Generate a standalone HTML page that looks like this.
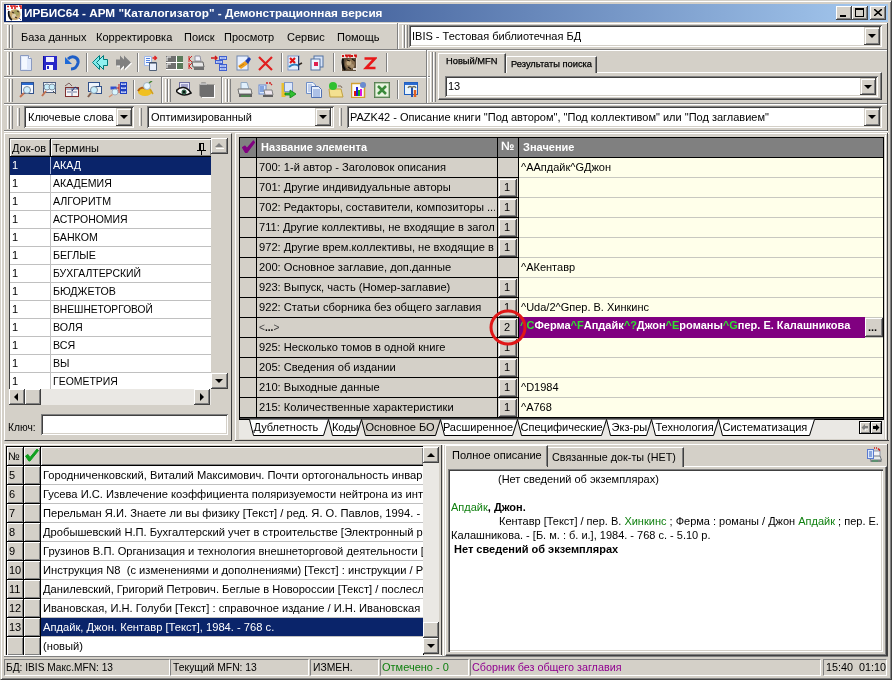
<!DOCTYPE html>
<html><head><meta charset="utf-8">
<style>
*{box-sizing:border-box;margin:0;padding:0}
html,body{width:892px;height:680px;overflow:hidden;background:#D4D0C8;font-family:"Liberation Sans",sans-serif;font-size:11px;color:#000}
.a{position:absolute}
.win{left:0;top:0;width:892px;height:680px;border-top:1px solid #D4D0C8;border-left:1px solid #D4D0C8;border-right:1px solid #404040;border-bottom:1px solid #404040;box-shadow:inset 1px 1px 0 #fff,inset -1px -1px 0 #808080}
.title{left:4px;top:4px;width:884px;height:18px;background:linear-gradient(to right,#0A246A,#A6CAF0)}
.ttext{left:24px;top:4px;height:18px;line-height:18px;color:#fff;font-weight:bold;font-size:11.75px;white-space:nowrap}
.tb{width:16px;height:14px;top:6px;background:#D4D0C8;box-shadow:inset -1px -1px 0 #404040,inset 1px 1px 0 #fff,inset -2px -2px 0 #808080}
.raised{background:#D4D0C8;box-shadow:inset -1px -1px 0 #404040,inset 1px 1px 0 #fff,inset -2px -2px 0 #808080}
.sunken{box-shadow:inset 1px 1px 0 #808080,inset -1px -1px 0 #fff,inset 2px 2px 0 #404040,inset -2px -2px 0 #D4D0C8}
.etchH{height:2px;border-top:1px solid #808080;border-bottom:1px solid #fff}
.grip{width:3px;border-left:1px solid #fff;border-right:1px solid #808080}
.combo{background:#fff;box-shadow:inset 1px 1px 0 #808080,inset -1px -1px 0 #fff,inset 2px 2px 0 #404040,inset -2px -2px 0 #D4D0C8}
.dd{width:16px;background:#D4D0C8;box-shadow:inset -1px -1px 0 #404040,inset 1px 1px 0 #D4D0C8,inset 2px 2px 0 #fff,inset -2px -2px 0 #808080}
.dd:after{content:"";position:absolute;left:4px;top:50%;margin-top:-2px;border-left:4px solid transparent;border-right:4px solid transparent;border-top:4px solid #000}
.ct{white-space:nowrap;line-height:14px}
.t{white-space:nowrap}
.raisedh{background:#D4D0C8;box-shadow:inset 1px 1px 0 #fff,inset -1px -1px 0 #808080}
.sep{width:2px;height:19px;border-left:1px solid #808080;border-right:1px solid #fff}
</style></head><body><div style="position:absolute;left:0;top:0;width:892px;height:680px;will-change:transform">
<div class="a win"></div>
<div class="a title"></div>
<svg class="a" style="left:6px;top:5px" width="16" height="16"><rect width="16" height="16" fill="#fff"/><path d="M1 1.5H3M4 1H6V4M7 1H9V4M10 1.5H12M13 1H15V4" stroke="#d81818" stroke-width="1.6" fill="none"/><path d="M2 4V5" stroke="#d81818"/><ellipse cx="9" cy="9.5" rx="5.5" ry="5.5" fill="#c8a870"/><ellipse cx="10.5" cy="8" rx="3" ry="3" fill="#a8a060"/><circle cx="8" cy="11" r="2.2" fill="#e0d0b0"/><path d="M3 6C2 9,3 13,6 15" stroke="#101010" stroke-width="1.8" fill="none"/><path d="M6 7L8 8M9 12L11 13M11 6L13 7" stroke="#403020" stroke-width="1.2"/><path d="M13 13L15 15" stroke="#6060a0"/></svg>
<div class="a ttext">ИРБИС64 - АРМ "Каталогизатор" - Демонстрационная версия</div>
<div class="a tb" style="left:836px"><div class="a" style="left:4px;top:9px;width:6px;height:2px;background:#000"></div></div>
<div class="a tb" style="left:852px"><div class="a" style="left:3px;top:2px;width:9px;height:9px;border:1px solid #000;border-top-width:2px"></div></div>
<div class="a tb" style="left:870px"><svg class="a" style="left:4px;top:3px" width="8" height="7"><path d="M0 0L8 7M8 0L0 7" stroke="#000" stroke-width="1.6"/></svg></div>

<!-- rebar rows -->
<div class="a" style="left:4px;top:23px;width:883px;height:1px;background:#fff"></div>
<div class="a etchH" style="left:4px;top:49px;width:884px"></div>
<div class="a etchH" style="left:4px;top:76px;width:426px"></div>
<div class="a etchH" style="left:4px;top:103px;width:884px"></div>
<div class="a etchH" style="left:4px;top:130px;width:884px"></div>

<!-- menu band -->
<div class="a grip" style="left:7px;top:25px;height:23px"></div>
<div class="a grip" style="left:10px;top:25px;height:23px"></div>
<div class="a t" style="left:21px;top:31px">База данных</div>
<div class="a t" style="left:96px;top:31px">Корректировка</div>
<div class="a t" style="left:184px;top:31px">Поиск</div>
<div class="a t" style="left:224px;top:31px">Просмотр</div>
<div class="a t" style="left:287px;top:31px">Сервис</div>
<div class="a t" style="left:337px;top:31px">Помощь</div>
<div class="a" style="left:397px;top:23px;width:2px;height:26px;border-left:1px solid #808080;border-right:1px solid #fff"></div>
<div class="a grip" style="left:402px;top:25px;height:23px"></div>
<div class="a grip" style="left:405px;top:25px;height:23px"></div>
<div class="a combo" style="left:409px;top:25px;width:473px;height:22px"><div class="a ct" style="left:3px;top:4px">IBIS - Тестовая библиотечная БД</div></div>
<div class="a dd" style="left:864px;top:27px;height:18px"></div>

<!-- toolbar row 1 -->
<div class="a grip" style="left:7px;top:52px;height:23px"></div>
<div class="a grip" style="left:10px;top:52px;height:23px"></div>
<div class="a" style="left:426px;top:50px;width:2px;height:53px;border-left:1px solid #808080;border-right:1px solid #fff"></div>
<div class="a sep" style="left:86px;top:53px"></div>
<div class="a sep" style="left:137px;top:53px"></div>
<div class="a sep" style="left:281px;top:53px"></div>
<div class="a sep" style="left:333px;top:53px"></div>
<div class="a sep" style="left:386px;top:53px"></div>
<svg class="a" style="left:18px;top:55px" width="16" height="16"><path d="M2.5 0.5H10.5L13.5 3.5V15.5H2.5Z" fill="#dfe8fa" stroke="#8a9ac0"/><path d="M10.5 0.5V3.5H13.5" fill="#fff" stroke="#8a9ac0"/><rect x="4" y="2" width="5" height="12" fill="#f4f8ff"/></svg>
<svg class="a" style="left:42px;top:55px" width="16" height="16"><rect x="1" y="1" width="14" height="14" fill="#2828c8"/><rect x="4" y="2" width="8" height="5" fill="#f0f0ff"/><rect x="4" y="10" width="7" height="5" fill="#f8f8ff"/><rect x="5" y="11" width="2" height="3" fill="#2828c8"/><rect x="1" y="1" width="1" height="14" fill="#1010a0"/></svg>
<svg class="a" style="left:64px;top:55px" width="16" height="16"><path d="M4 4 C8 0,15 2,14 8 C13 12,10 14,7 14" fill="none" stroke="#1e5fc8" stroke-width="3"/><path d="M1 2L1 9L8 9Z" fill="#1e6ad8"/></svg>
<svg class="a" style="left:92px;top:55px" width="17" height="16"><path d="M0.5 7.5L7.5 0.5V14.5Z" fill="#80eaea" stroke="#008080"/><path d="M4.5 7.5L11.5 0.5V4.5H15.5V10.5H11.5V14.5Z" fill="#90f0f0" stroke="#007878"/></svg>
<svg class="a" style="left:115px;top:55px" width="18" height="17"><g transform="translate(1,1)" fill="#fff"><path d="M16 7.5L9 0.5V14.5Z"/><path d="M12 7.5L5 0.5V4.5H1V10.5H5V14.5Z"/></g><path d="M16 7.5L9 0.5V14.5Z" fill="#808080"/><path d="M12 7.5L5 0.5V4.5H1V10.5H5V14.5Z" fill="#808080"/></svg>
<svg class="a" style="left:143px;top:55px" width="16" height="16"><path d="M1.5 1.5H8.5V10.5H1.5Z" fill="#f4f8ff" stroke="#a0b8e8"/><path d="M3 3.5H7M3 5.5H7M3 7.5H7" stroke="#5080e0"/><path d="M6.5 7.5H13.5V15.5H6.5Z" fill="#eaf0fc" stroke="#506078"/><path d="M7 8H13" stroke="#30405a"/><path d="M9.5 3H13M11.5 1L13.5 3L11.5 5" stroke="#e02020" stroke-width="1.4" fill="none"/></svg>
<svg class="a" style="left:166px;top:56px" width="17" height="15"><rect x="0" y="0" width="10" height="6" fill="#707070"/><rect x="0" y="7" width="10" height="6" fill="#707070"/><rect x="11" y="0" width="6" height="6" fill="#5a7a5a"/><rect x="11" y="7" width="6" height="6" fill="#5a7a5a"/><path d="M1 5V1H5M1 12V8H5" stroke="#fff" fill="none"/><path d="M0 6.5H17M0 13.5H17M10.5 0V14" stroke="#fff"/></svg>
<svg class="a" style="left:188px;top:55px" width="17" height="16"><path d="M1 1V7M1 4L4 1M1 4L4 7M1 8V14M1 11L4 8M1 11L4 14" stroke="#d02020" fill="none"/><path d="M7 1H12L13 6H7Z" fill="#f0f0f8" stroke="#9090a0"/><path d="M4 7H15L16 12H5Z" fill="#e8e8e8" stroke="#606060"/><rect x="6" y="12" width="10" height="3" fill="#707070"/></svg>
<svg class="a" style="left:211px;top:55px" width="17" height="16"><path d="M0 3H6M4 1L6 3L4 5" stroke="#d01818" stroke-width="1.4" fill="none"/><rect x="8.5" y="1.5" width="7" height="3" fill="#e0e8fc" stroke="#4060d0"/><rect x="4.5" y="5.5" width="7" height="3" fill="#e0e8fc" stroke="#4060d0"/><rect x="8.5" y="9.5" width="7" height="3" fill="#e0e8fc" stroke="#4060d0"/><rect x="8.5" y="12.5" width="7" height="3" fill="#e0e8fc" stroke="#4060d0"/><path d="M9.5 3H14.5M5.5 7H10.5M9.5 11H14.5M9.5 14H14.5" stroke="#6080e0"/></svg>
<svg class="a" style="left:236px;top:55px" width="16" height="16"><rect x="1" y="1" width="11" height="14" fill="#e8f0ff" stroke="#7088b0"/><path d="M2 11L9 6L12 9L5 14Z" fill="#f0a020"/><path d="M9 6L13 2L15 4L12 9Z" fill="#2040b0"/><path d="M3 12L8 9" stroke="#c08010"/></svg>
<svg class="a" style="left:258px;top:56px" width="16" height="15"><path d="M1 1L14 14M14 1L1 14" stroke="#e02020" stroke-width="2.2"/></svg>
<svg class="a" style="left:287px;top:55px" width="16" height="16"><rect x="1" y="1" width="11" height="14" fill="#e4eefc" stroke="#8098c8"/><path d="M3 3L8 8M8 3L3 8" stroke="#e01010" stroke-width="2.2"/><path d="M2 12C5 9,9 9,12 11" stroke="#3080c0" stroke-width="2" fill="none"/><path d="M11 10L15 8" stroke="#302820" stroke-width="1.5"/><rect x="11" y="1" width="1" height="14" fill="#284070"/></svg>
<svg class="a" style="left:310px;top:55px" width="14" height="16"><rect x="4" y="1" width="9" height="11" fill="#d8e4f8" stroke="#5070a0"/><rect x="1" y="4" width="9" height="11" fill="#eef4ff" stroke="#5070a0"/><rect x="4" y="7" width="4" height="4" fill="#e02050"/></svg>
<svg class="a" style="left:341px;top:54px" width="16" height="17"><rect width="16" height="17" fill="#e8e0d8"/><path d="M1 2H3M4 1.5H6V3.5M7 1.5H9V3.5M10 2H12M13 1.5H15V3.5" stroke="#d01010" stroke-width="1.8" fill="none"/><rect x="1" y="4" width="14" height="13" fill="#5a4a38"/><ellipse cx="9" cy="10" rx="5" ry="5.5" fill="#8a7050"/><circle cx="8" cy="9" r="2.5" fill="#c0a880"/><circle cx="11" cy="12" r="2" fill="#a89070"/><path d="M2 5C1 9,2 13,4 16" stroke="#0a0a0a" stroke-width="2.2" fill="none"/><path d="M6 6L9 7M7 13L10 15M11 5L14 7" stroke="#201810" stroke-width="1.2"/><path d="M12 14H15V16H12Z" fill="#e0d8d0"/></svg>
<svg class="a" style="left:363px;top:57px" width="14" height="13"><path d="M1.5 1.5H12L3 11H12.5" fill="none" stroke="#e81818" stroke-width="2.6" stroke-linejoin="miter"/></svg>

<!-- toolbar row 2 -->
<div class="a grip" style="left:7px;top:79px;height:23px"></div>
<div class="a grip" style="left:10px;top:79px;height:23px"></div>
<div class="a sep" style="left:133px;top:80px"></div>
<div class="a" style="left:161px;top:77px;width:2px;height:26px;border-left:1px solid #808080;border-right:1px solid #fff"></div>
<div class="a grip" style="left:165px;top:79px;height:23px"></div>
<div class="a grip" style="left:168px;top:79px;height:23px"></div>
<div class="a" style="left:221px;top:77px;width:2px;height:26px;border-left:1px solid #808080;border-right:1px solid #fff"></div>
<div class="a grip" style="left:225px;top:79px;height:23px"></div>
<div class="a grip" style="left:228px;top:79px;height:23px"></div>
<div class="a sep" style="left:397px;top:80px"></div>
<svg class="a" style="left:18px;top:82px" width="16" height="16"><rect x="3.5" y="0.5" width="12" height="11" fill="#f4f8ff" stroke="#30508a"/><rect x="4" y="1" width="11" height="2" fill="#2a6ad0"/><circle cx="9" cy="8" r="3.5" fill="#d0eefc" stroke="#8090a0"/><path d="M6 11L2 15" stroke="#c07050" stroke-width="2"/></svg>
<svg class="a" style="left:41px;top:82px" width="16" height="16"><rect x="2.5" y="0.5" width="12" height="10" fill="#eef4fc" stroke="#506080"/><circle cx="6" cy="5" r="3" fill="#c8eefc" stroke="#8090a0"/><circle cx="11" cy="5" r="3" fill="#c8eefc" stroke="#8090a0"/><path d="M5 9L1 14" stroke="#c07050" stroke-width="2"/><path d="M12 9L15 12" stroke="#505050"/></svg>
<svg class="a" style="left:64px;top:82px" width="16" height="16"><path d="M1 4L5 1L8 4" stroke="#806060" fill="none"/><rect x="1.5" y="5.5" width="13" height="9" fill="#f8f4f4" stroke="#803030"/><path d="M2 7H14M8 6V14M3 10H7M9 10H13" stroke="#6a7aa0"/><path d="M8 9L11 5L14 7" stroke="#203070" fill="none"/></svg>
<svg class="a" style="left:87px;top:82px" width="16" height="16"><rect x="1.5" y="0.5" width="11" height="9" fill="#eef4fc" stroke="#30508a"/><rect x="7.5" y="4.5" width="7" height="7" fill="#f0f0f0" stroke="#30508a"/><circle cx="7" cy="8" r="3.5" fill="#c8eefc" stroke="#8090a0"/><path d="M4 11L1 15" stroke="#806050" stroke-width="2"/></svg>
<svg class="a" style="left:107px;top:82px" width="20" height="16"><path d="M12 2V11M5 6H12" stroke="#c01818"/><rect x="13.5" y="0.5" width="6" height="3" fill="#dfe6fc" stroke="#2040c0"/><rect x="13.5" y="4.5" width="6" height="3" fill="#dfe6fc" stroke="#2040c0"/><rect x="13.5" y="8.5" width="6" height="3" fill="#dfe6fc" stroke="#2040c0"/><path d="M14.5 1.8H18.5M14.5 5.8H18.5M14.5 9.8H18.5" stroke="#4060d0"/><rect x="3.5" y="4.5" width="6" height="3" fill="#3050d0"/><circle cx="8" cy="10" r="3" fill="#d8f4fc" stroke="#a0b0c0"/><path d="M5.5 12.5L2 15" stroke="#d09070" stroke-width="1.5"/></svg>
<svg class="a" style="left:137px;top:81px" width="17" height="17"><ellipse cx="8" cy="11" rx="7" ry="4" fill="#f0c020"/><path d="M1 10C3 6,7 6,9 8" stroke="#b06010" stroke-width="2" fill="none"/><circle cx="10" cy="5" r="3.5" fill="#e8f8ff" stroke="#a0b0c0"/><path d="M12 2L15 0" stroke="#408030" stroke-width="1.5"/><path d="M13 8L16 13" stroke="#d0a020" stroke-width="1.5"/></svg>
<svg class="a" style="left:176px;top:82px" width="16" height="16"><rect x="3.5" y="0.5" width="10" height="9" fill="#e8e8f8" stroke="#7070a0"/><path d="M5 3H12M5 5H12" stroke="#6060a0"/><path d="M0 9C4 4,11 4,15 11C10 14,5 14,0 9Z" fill="#fff" stroke="#101010" stroke-width="1.6"/><circle cx="8" cy="10" r="2.5" fill="#306048"/><circle cx="8" cy="10" r="1" fill="#000"/></svg>
<svg class="a" style="left:199px;top:82px" width="16" height="16"><path d="M0.5 2.5L2.5 0.5H6.5L8.5 2.5H15.5V15.5H2.5L0.5 13.5Z" fill="#6e6e6e"/><path d="M1 2H8" stroke="#fff"/><path d="M3 15.5H16M15.5 3V16" stroke="#fff"/></svg>
<svg class="a" style="left:237px;top:82px" width="16" height="16"><path d="M4 0.5H10L12 7H4Z" fill="#e0f0fc" stroke="#90a8c0"/><path d="M1 7H14L15 12H2Z" fill="#ececec" stroke="#707070"/><rect x="2" y="12" width="13" height="3" fill="#606060"/><path d="M4 14H13" stroke="#40a040"/></svg>
<svg class="a" style="left:258px;top:82px" width="16" height="16"><rect x="1" y="3" width="7" height="9" fill="#d8e8fc" stroke="#6a8ad0"/><path d="M2 5H6M2 7H6M2 9H6" stroke="#3060c0"/><path d="M6 8H14L15 13H7Z" fill="#f0e8f0" stroke="#808080"/><rect x="5" y="13" width="10" height="2" fill="#606060"/><path d="M8 1H10M11 1H13M13 2L14 3" stroke="#d02020" stroke-width="1.4"/></svg>
<svg class="a" style="left:281px;top:82px" width="16" height="16"><rect x="0.5" y="1" width="4" height="14" fill="#e8c030"/><rect x="3.5" y="0.5" width="8" height="9" fill="#dce8fc" stroke="#8098c8"/><path d="M4 11H9V8L15 12L9 16V13H4Z" fill="#30c030" stroke="#108010" stroke-width=".8"/></svg>
<svg class="a" style="left:306px;top:82px" width="16" height="16"><path d="M0.5 0.5H7L9.5 3V11.5H0.5Z" fill="#eef4fc" stroke="#7090c8"/><path d="M2 3H6M2 5H8M2 7H8M2 9H8" stroke="#90a8d8"/><path d="M5.5 4.5H12.5L15.5 7.5V15.5H5.5Z" fill="#e8f0fc" stroke="#5070b0"/><path d="M7 8H14M7 10H14M7 12H14M7 14H14" stroke="#7090d0"/></svg>
<svg class="a" style="left:328px;top:82px" width="16" height="16"><path d="M1 7H13L15 15H2Z" fill="#f4e090" stroke="#c0a040"/><circle cx="5" cy="4" r="4" fill="#30c030"/><path d="M10 4L13 4L14 6" stroke="#807060" fill="none"/></svg>
<svg class="a" style="left:351px;top:82px" width="16" height="16"><rect x="0.5" y="1.5" width="13" height="14" fill="#fcfcfc" stroke="#d0a030" stroke-width="1.5"/><rect x="3" y="9" width="2" height="5" fill="#e01010"/><rect x="5" y="5" width="2" height="9" fill="#2020d0"/><rect x="7" y="8" width="2" height="6" fill="#10b010"/><rect x="9" y="7" width="2" height="7" fill="#e010e0"/><circle cx="12" cy="3" r="3" fill="#6a8ad0"/></svg>
<svg class="a" style="left:374px;top:82px" width="16" height="16"><rect x="0.5" y="0.5" width="15" height="15" fill="#e8f4e0" stroke="#406a40"/><rect x="1" y="1" width="14" height="14" fill="none" stroke="#7aa070"/><path d="M4 4L12 12M12 4L4 12" stroke="#3a8a3a" stroke-width="2.5"/></svg>
<svg class="a" style="left:404px;top:82px" width="16" height="16"><rect x="0.5" y="0.5" width="13" height="12" fill="#e8f4fc" stroke="#2060c0"/><rect x="1" y="1" width="12" height="2" fill="#2a6ad0"/><path d="M4 6C5 4,7 4,8 6M8 6C9 4,11 4,12 6" stroke="#707060" stroke-width="1.5" fill="none"/><rect x="7" y="6" width="2" height="9" fill="#2050b0"/><path d="M11 8V15" stroke="#e06020" stroke-width="2.5"/></svg>
<!-- tab band -->
<div class="a grip" style="left:430px;top:52px;height:50px"></div>
<div class="a grip" style="left:433px;top:52px;height:50px"></div>
<div class="a" style="left:438px;top:72px;width:444px;height:28px;border-top:1px solid #fff;border-left:1px solid #fff;border-right:1px solid #404040;border-bottom:1px solid #404040;box-shadow:inset -1px -1px 0 #808080"></div>
<div class="a" style="left:506px;top:56px;width:91px;height:17px;background:#D4D0C8;border-top:1px solid #fff;border-left:1px solid #fff;border-right:1px solid #404040;box-shadow:inset -1px 0 0 #808080"><div class="a t" style="left:4px;top:2px;font-size:9.3px;-webkit-text-stroke:0.25px #000">Результаты поиска</div></div>
<div class="a" style="left:438px;top:53px;width:68px;height:20px;background:#D4D0C8;border-top:1px solid #fff;border-left:1px solid #fff;border-right:1px solid #404040;box-shadow:inset -1px 0 0 #808080"><div class="a t" style="left:7px;top:2px;font-size:9.3px;-webkit-text-stroke:0.25px #000">Новый/MFN</div></div>
<div class="a combo" style="left:445px;top:76px;width:433px;height:21px"><div class="a ct" style="left:3px;top:3px;font-size:11px">13</div></div>
<div class="a dd" style="left:860px;top:78px;height:17px"></div>

<!-- row 4 combos -->
<div class="a grip" style="left:7px;top:106px;height:23px"></div>
<div class="a grip" style="left:10px;top:106px;height:23px"></div>
<div class="a" style="left:17px;top:108px;width:3px;height:18px;border-left:1px solid #fff;border-right:1px solid #808080"></div>
<div class="a combo" style="left:24px;top:106px;width:110px;height:22px"><div class="a ct" style="left:4px;top:4px">Ключевые слова</div></div>
<div class="a dd" style="left:116px;top:108px;height:18px"></div>
<div class="a" style="left:139px;top:108px;width:3px;height:18px;border-left:1px solid #fff;border-right:1px solid #808080"></div>
<div class="a combo" style="left:147px;top:106px;width:187px;height:22px"><div class="a ct" style="left:4px;top:4px">Оптимизированный</div></div>
<div class="a dd" style="left:315px;top:108px;height:18px"></div>
<div class="a" style="left:339px;top:108px;width:3px;height:18px;border-left:1px solid #fff;border-right:1px solid #808080"></div>
<div class="a combo" style="left:347px;top:106px;width:535px;height:22px"><div class="a ct" style="left:3px;top:4px">PAZK42 - Описание книги "Под автором", "Под коллективом" или "Под заглавием"</div></div>
<div class="a dd" style="left:864px;top:108px;height:18px"></div>
<!-- left panel -->
<div class="a" style="left:4px;top:133px;width:228px;height:308px;border-top:1px solid #fff;border-left:1px solid #fff;border-right:1px solid #404040;border-bottom:1px solid #404040"></div>
<div class="a" style="left:9px;top:138px;width:202px;height:251px;background:#fff;border-top:1px solid #404040;border-left:1px solid #404040;overflow:hidden">
<div class="a raisedh" style="left:0;top:0;width:40px;height:17px"><div class="a t" style="left:2px;top:3px">Док-ов</div></div>
<div class="a" style="left:40px;top:0;width:1px;height:17px;background:#000"></div>
<div class="a raisedh" style="left:41px;top:0;width:160px;height:17px"><div class="a t" style="left:2px;top:3px">Термины</div></div>
<div class="a" style="left:0;top:17px;width:201px;height:1px;background:#000"></div>
<svg class="a" style="left:187px;top:4px" width="9" height="12"><path d="M2 0.5H7M2.5 0.5V7M6.5 0.5V7M0 7.5H9M4.5 7V12" stroke="#000" fill="none"/><path d="M3.5 1V7" stroke="#000"/></svg>
<div class="a" style="left:0;top:18px;width:201px;height:17px;background:#0A246A;color:#fff"><div class="a t" style="left:2px;top:2px">1</div><div class="a t" style="left:43px;top:2px;transform:scaleX(0.97);transform-origin:0 0">АКАД</div></div>
<div class="a" style="left:0;top:35px;width:201px;height:1px;background:#0A246A"></div>
<div class="a" style="left:40px;top:18px;width:1px;height:17px;background:#a6b4d8"></div>
<div class="a" style="left:0;top:36px;width:201px;height:17px;background:#fff;color:#000"><div class="a t" style="left:2px;top:2px">1</div><div class="a t" style="left:43px;top:2px;transform:scaleX(0.96);transform-origin:0 0">АКАДЕМИЯ</div></div>
<div class="a" style="left:0;top:53px;width:201px;height:1px;background:#c0c0c0"></div>
<div class="a" style="left:40px;top:36px;width:1px;height:17px;background:#c0c0c0"></div>
<div class="a" style="left:0;top:54px;width:201px;height:17px;background:#fff;color:#000"><div class="a t" style="left:2px;top:2px">1</div><div class="a t" style="left:43px;top:2px;transform:scaleX(0.97);transform-origin:0 0">АЛГОРИТМ</div></div>
<div class="a" style="left:0;top:71px;width:201px;height:1px;background:#c0c0c0"></div>
<div class="a" style="left:40px;top:54px;width:1px;height:17px;background:#c0c0c0"></div>
<div class="a" style="left:0;top:72px;width:201px;height:17px;background:#fff;color:#000"><div class="a t" style="left:2px;top:2px">1</div><div class="a t" style="left:43px;top:2px;transform:scaleX(0.95);transform-origin:0 0">АСТРОНОМИЯ</div></div>
<div class="a" style="left:0;top:89px;width:201px;height:1px;background:#c0c0c0"></div>
<div class="a" style="left:40px;top:72px;width:1px;height:17px;background:#c0c0c0"></div>
<div class="a" style="left:0;top:90px;width:201px;height:17px;background:#fff;color:#000"><div class="a t" style="left:2px;top:2px">1</div><div class="a t" style="left:43px;top:2px;transform:scaleX(0.97);transform-origin:0 0">БАНКОМ</div></div>
<div class="a" style="left:0;top:107px;width:201px;height:1px;background:#c0c0c0"></div>
<div class="a" style="left:40px;top:90px;width:1px;height:17px;background:#c0c0c0"></div>
<div class="a" style="left:0;top:108px;width:201px;height:17px;background:#fff;color:#000"><div class="a t" style="left:2px;top:2px">1</div><div class="a t" style="left:43px;top:2px;transform:scaleX(0.97);transform-origin:0 0">БЕГЛЫЕ</div></div>
<div class="a" style="left:0;top:125px;width:201px;height:1px;background:#c0c0c0"></div>
<div class="a" style="left:40px;top:108px;width:1px;height:17px;background:#c0c0c0"></div>
<div class="a" style="left:0;top:126px;width:201px;height:17px;background:#fff;color:#000"><div class="a t" style="left:2px;top:2px">1</div><div class="a t" style="left:43px;top:2px;transform:scaleX(0.95);transform-origin:0 0">БУХГАЛТЕРСКИЙ</div></div>
<div class="a" style="left:0;top:143px;width:201px;height:1px;background:#c0c0c0"></div>
<div class="a" style="left:40px;top:126px;width:1px;height:17px;background:#c0c0c0"></div>
<div class="a" style="left:0;top:144px;width:201px;height:17px;background:#fff;color:#000"><div class="a t" style="left:2px;top:2px">1</div><div class="a t" style="left:43px;top:2px;transform:scaleX(0.97);transform-origin:0 0">БЮДЖЕТОВ</div></div>
<div class="a" style="left:0;top:161px;width:201px;height:1px;background:#c0c0c0"></div>
<div class="a" style="left:40px;top:144px;width:1px;height:17px;background:#c0c0c0"></div>
<div class="a" style="left:0;top:162px;width:201px;height:17px;background:#fff;color:#000"><div class="a t" style="left:2px;top:2px">1</div><div class="a t" style="left:43px;top:2px;transform:scaleX(0.93);transform-origin:0 0">ВНЕШНЕТОРГОВОЙ</div></div>
<div class="a" style="left:0;top:179px;width:201px;height:1px;background:#c0c0c0"></div>
<div class="a" style="left:40px;top:162px;width:1px;height:17px;background:#c0c0c0"></div>
<div class="a" style="left:0;top:180px;width:201px;height:17px;background:#fff;color:#000"><div class="a t" style="left:2px;top:2px">1</div><div class="a t" style="left:43px;top:2px;transform:scaleX(0.97);transform-origin:0 0">ВОЛЯ</div></div>
<div class="a" style="left:0;top:197px;width:201px;height:1px;background:#c0c0c0"></div>
<div class="a" style="left:40px;top:180px;width:1px;height:17px;background:#c0c0c0"></div>
<div class="a" style="left:0;top:198px;width:201px;height:17px;background:#fff;color:#000"><div class="a t" style="left:2px;top:2px">1</div><div class="a t" style="left:43px;top:2px;transform:scaleX(0.97);transform-origin:0 0">ВСЯ</div></div>
<div class="a" style="left:0;top:215px;width:201px;height:1px;background:#c0c0c0"></div>
<div class="a" style="left:40px;top:198px;width:1px;height:17px;background:#c0c0c0"></div>
<div class="a" style="left:0;top:216px;width:201px;height:17px;background:#fff;color:#000"><div class="a t" style="left:2px;top:2px">1</div><div class="a t" style="left:43px;top:2px;transform:scaleX(0.97);transform-origin:0 0">ВЫ</div></div>
<div class="a" style="left:0;top:233px;width:201px;height:1px;background:#c0c0c0"></div>
<div class="a" style="left:40px;top:216px;width:1px;height:17px;background:#c0c0c0"></div>
<div class="a" style="left:0;top:234px;width:201px;height:17px;background:#fff;color:#000"><div class="a t" style="left:2px;top:2px">1</div><div class="a t" style="left:43px;top:2px;transform:scaleX(0.95);transform-origin:0 0">ГЕОМЕТРИЯ</div></div>
<div class="a" style="left:0;top:251px;width:201px;height:1px;background:#c0c0c0"></div>
<div class="a" style="left:40px;top:234px;width:1px;height:17px;background:#c0c0c0"></div>
</div>
<div class="a" style="left:211px;top:138px;width:17px;height:252px;background:#D4D0C8"></div>
<div class="a raised" style="left:211px;top:138px;width:17px;height:16px"><div class="a" style="left:4px;top:5px;border-left:4px solid transparent;border-right:4px solid transparent;border-bottom:4px solid #808080"></div><div class="a" style="left:5px;top:10px;width:8px;height:1px;background:#fff"></div></div>
<div class="a raised" style="left:211px;top:373px;width:17px;height:16px"><div class="a" style="left:4px;top:6px;border-left:4px solid transparent;border-right:4px solid transparent;border-top:4px solid #000"></div></div>
<div class="a" style="left:9px;top:389px;width:202px;height:16px;background:#EAE8E4"></div>
<div class="a raised" style="left:9px;top:389px;width:16px;height:16px"><div class="a" style="left:5px;top:4px;border-top:4px solid transparent;border-bottom:4px solid transparent;border-right:4px solid #000"></div></div>
<div class="a raised" style="left:25px;top:389px;width:16px;height:16px"></div>
<div class="a raised" style="left:194px;top:389px;width:16px;height:16px"><div class="a" style="left:6px;top:4px;border-top:4px solid transparent;border-bottom:4px solid transparent;border-left:4px solid #000"></div></div>
<div class="a t" style="left:8px;top:421px;transform:scaleX(0.93);transform-origin:0 0">Ключ:</div>
<div class="a combo" style="left:41px;top:414px;width:187px;height:21px"></div>
<!-- main grid -->
<div class="a" style="left:235px;top:133px;width:654px;height:308px;border-top:1px solid #fff;border-left:1px solid #fff"></div>
<div class="a" style="left:239px;top:137px;width:645px;height:281px;background:#000"></div>
<div class="a" style="left:240px;top:138px;width:16px;height:19px;background:#808080"></div>
<svg class="a" style="left:242px;top:140px" width="13" height="13"><path d="M0.5 7.5L3 6L5 8.5L11.5 1L12.5 2.5L5 12.5L3.5 12.5Z" fill="#800080" stroke="#800080" stroke-width="1.2" stroke-linejoin="round"/></svg>
<div class="a" style="left:257px;top:138px;width:240px;height:19px;background:#808080"><div class="a t" style="left:4px;top:3px;color:#fff;font-weight:bold">Название элемента</div></div>
<div class="a" style="left:498px;top:138px;width:20px;height:19px;background:#808080"><div class="a t" style="left:3px;top:1px;color:#fff;font-weight:bold;font-size:12px">№</div></div>
<div class="a" style="left:519px;top:138px;width:364px;height:19px;background:#808080"><div class="a t" style="left:4px;top:3px;color:#fff;font-weight:bold">Значение</div></div>
<div class="a" style="left:240px;top:158px;width:16px;height:19px;background:#D4D0C8"></div>
<div class="a" style="left:257px;top:158px;width:240px;height:19px;background:#D4D0C8"><div class="a" style="left:0;top:0;width:238px;height:19px;overflow:hidden"><div class="a t" style="left:2px;top:3px;transform:scaleX(1.012);transform-origin:0 0">700: 1-й автор - Заголовок описания</div></div></div>
<div class="a" style="left:498px;top:158px;width:20px;height:19px;background:#D4D0C8"></div>
<div class="a" style="left:519px;top:158px;width:364px;height:19px;background:#FFFFEA;border-top:0"></div>
<div class="a t" style="left:521px;top:161px">^AАпдайк^GДжон</div>
<div class="a" style="left:240px;top:178px;width:16px;height:19px;background:#D4D0C8"></div>
<div class="a" style="left:257px;top:178px;width:240px;height:19px;background:#D4D0C8"><div class="a" style="left:0;top:0;width:238px;height:19px;overflow:hidden"><div class="a t" style="left:2px;top:3px;transform:scaleX(1.012);transform-origin:0 0">701: Другие индивидуальные авторы</div></div></div>
<div class="a" style="left:498px;top:178px;width:20px;height:19px;background:#D4D0C8"></div>
<div class="a raised" style="left:499px;top:179px;width:18px;height:18px"><div class="a t" style="left:5px;top:2px">1</div></div>
<div class="a" style="left:519px;top:177px;width:364px;height:20px;background:#FFFFEA;border-top:1px solid #c8c8c0"></div>
<div class="a" style="left:240px;top:198px;width:16px;height:19px;background:#D4D0C8"></div>
<div class="a" style="left:257px;top:198px;width:240px;height:19px;background:#D4D0C8"><div class="a" style="left:0;top:0;width:238px;height:19px;overflow:hidden"><div class="a t" style="left:2px;top:3px;transform:scaleX(1.012);transform-origin:0 0">702: Редакторы, составители, композиторы ...</div></div></div>
<div class="a" style="left:498px;top:198px;width:20px;height:19px;background:#D4D0C8"></div>
<div class="a raised" style="left:499px;top:199px;width:18px;height:18px"><div class="a t" style="left:5px;top:2px">1</div></div>
<div class="a" style="left:519px;top:197px;width:364px;height:20px;background:#FFFFEA;border-top:1px solid #c8c8c0"></div>
<div class="a" style="left:240px;top:218px;width:16px;height:19px;background:#D4D0C8"></div>
<div class="a" style="left:257px;top:218px;width:240px;height:19px;background:#D4D0C8"><div class="a" style="left:0;top:0;width:238px;height:19px;overflow:hidden"><div class="a t" style="left:2px;top:3px;transform:scaleX(1.012);transform-origin:0 0">711: Другие коллективы, не входящие в заголовок</div></div></div>
<div class="a" style="left:498px;top:218px;width:20px;height:19px;background:#D4D0C8"></div>
<div class="a raised" style="left:499px;top:219px;width:18px;height:18px"><div class="a t" style="left:5px;top:2px">1</div></div>
<div class="a" style="left:519px;top:217px;width:364px;height:20px;background:#FFFFEA;border-top:1px solid #c8c8c0"></div>
<div class="a" style="left:240px;top:238px;width:16px;height:19px;background:#D4D0C8"></div>
<div class="a" style="left:257px;top:238px;width:240px;height:19px;background:#D4D0C8"><div class="a" style="left:0;top:0;width:238px;height:19px;overflow:hidden"><div class="a t" style="left:2px;top:3px;transform:scaleX(1.012);transform-origin:0 0">972: Другие врем.коллективы, не входящие в заголовок</div></div></div>
<div class="a" style="left:498px;top:238px;width:20px;height:19px;background:#D4D0C8"></div>
<div class="a raised" style="left:499px;top:239px;width:18px;height:18px"><div class="a t" style="left:5px;top:2px">1</div></div>
<div class="a" style="left:519px;top:237px;width:364px;height:20px;background:#FFFFEA;border-top:1px solid #c8c8c0"></div>
<div class="a" style="left:240px;top:258px;width:16px;height:19px;background:#D4D0C8"></div>
<div class="a" style="left:257px;top:258px;width:240px;height:19px;background:#D4D0C8"><div class="a" style="left:0;top:0;width:238px;height:19px;overflow:hidden"><div class="a t" style="left:2px;top:3px;transform:scaleX(1.012);transform-origin:0 0">200: Основное заглавие, доп.данные</div></div></div>
<div class="a" style="left:498px;top:258px;width:20px;height:19px;background:#D4D0C8"></div>
<div class="a" style="left:519px;top:257px;width:364px;height:20px;background:#FFFFEA;border-top:1px solid #c8c8c0"></div>
<div class="a t" style="left:521px;top:261px">^AКентавр</div>
<div class="a" style="left:240px;top:278px;width:16px;height:19px;background:#D4D0C8"></div>
<div class="a" style="left:257px;top:278px;width:240px;height:19px;background:#D4D0C8"><div class="a" style="left:0;top:0;width:238px;height:19px;overflow:hidden"><div class="a t" style="left:2px;top:3px;transform:scaleX(1.012);transform-origin:0 0">923: Выпуск, часть (Номер-заглавие)</div></div></div>
<div class="a" style="left:498px;top:278px;width:20px;height:19px;background:#D4D0C8"></div>
<div class="a raised" style="left:499px;top:279px;width:18px;height:18px"><div class="a t" style="left:5px;top:2px">1</div></div>
<div class="a" style="left:519px;top:277px;width:364px;height:20px;background:#FFFFEA;border-top:1px solid #c8c8c0"></div>
<div class="a" style="left:240px;top:298px;width:16px;height:19px;background:#D4D0C8"></div>
<div class="a" style="left:257px;top:298px;width:240px;height:19px;background:#D4D0C8"><div class="a" style="left:0;top:0;width:238px;height:19px;overflow:hidden"><div class="a t" style="left:2px;top:3px;transform:scaleX(1.012);transform-origin:0 0">922: Статьи сборника без общего заглавия</div></div></div>
<div class="a" style="left:498px;top:298px;width:20px;height:19px;background:#D4D0C8"></div>
<div class="a raised" style="left:499px;top:299px;width:18px;height:18px"><div class="a t" style="left:5px;top:2px">1</div></div>
<div class="a" style="left:519px;top:297px;width:364px;height:20px;background:#FFFFEA;border-top:1px solid #c8c8c0"></div>
<div class="a t" style="left:521px;top:301px">^Uda/2^Gпер. В. Хинкинс</div>
<div class="a" style="left:240px;top:318px;width:16px;height:19px;background:#D4D0C8"></div>
<div class="a" style="left:257px;top:318px;width:240px;height:19px;background:#D4D0C8"><div class="a" style="left:0;top:0;width:238px;height:19px;overflow:hidden"><div class="a t" style="left:2px;top:3px;transform:scaleX(1.015);transform-origin:0 0"><span style="color:#404040;font-size:10px">&lt;</span><b style="font-size:10px">...</b><span style="color:#404040;font-size:10px">&gt;</span></div></div></div>
<div class="a" style="left:498px;top:318px;width:20px;height:19px;background:#D4D0C8"></div>
<div class="a raised" style="left:499px;top:319px;width:18px;height:18px"><div class="a t" style="left:5px;top:2px">2</div></div>
<div class="a" style="left:519px;top:317px;width:364px;height:20px;background:#FFFFEA;border-top:1px solid #c8c8c0"></div>
<div class="a" style="left:240px;top:338px;width:16px;height:19px;background:#D4D0C8"></div>
<div class="a" style="left:257px;top:338px;width:240px;height:19px;background:#D4D0C8"><div class="a" style="left:0;top:0;width:238px;height:19px;overflow:hidden"><div class="a t" style="left:2px;top:3px;transform:scaleX(1.012);transform-origin:0 0">925: Несколько томов в одной книге</div></div></div>
<div class="a" style="left:498px;top:338px;width:20px;height:19px;background:#D4D0C8"></div>
<div class="a raised" style="left:499px;top:339px;width:18px;height:18px"><div class="a t" style="left:5px;top:2px">1</div></div>
<div class="a" style="left:519px;top:337px;width:364px;height:20px;background:#FFFFEA;border-top:1px solid #c8c8c0"></div>
<div class="a" style="left:240px;top:358px;width:16px;height:19px;background:#D4D0C8"></div>
<div class="a" style="left:257px;top:358px;width:240px;height:19px;background:#D4D0C8"><div class="a" style="left:0;top:0;width:238px;height:19px;overflow:hidden"><div class="a t" style="left:2px;top:3px;transform:scaleX(1.012);transform-origin:0 0">205: Сведения об издании</div></div></div>
<div class="a" style="left:498px;top:358px;width:20px;height:19px;background:#D4D0C8"></div>
<div class="a raised" style="left:499px;top:359px;width:18px;height:18px"><div class="a t" style="left:5px;top:2px">1</div></div>
<div class="a" style="left:519px;top:357px;width:364px;height:20px;background:#FFFFEA;border-top:1px solid #c8c8c0"></div>
<div class="a" style="left:240px;top:378px;width:16px;height:19px;background:#D4D0C8"></div>
<div class="a" style="left:257px;top:378px;width:240px;height:19px;background:#D4D0C8"><div class="a" style="left:0;top:0;width:238px;height:19px;overflow:hidden"><div class="a t" style="left:2px;top:3px;transform:scaleX(1.012);transform-origin:0 0">210: Выходные данные</div></div></div>
<div class="a" style="left:498px;top:378px;width:20px;height:19px;background:#D4D0C8"></div>
<div class="a raised" style="left:499px;top:379px;width:18px;height:18px"><div class="a t" style="left:5px;top:2px">1</div></div>
<div class="a" style="left:519px;top:377px;width:364px;height:20px;background:#FFFFEA;border-top:1px solid #c8c8c0"></div>
<div class="a t" style="left:521px;top:381px">^D1984</div>
<div class="a" style="left:240px;top:398px;width:16px;height:19px;background:#D4D0C8"></div>
<div class="a" style="left:257px;top:398px;width:240px;height:19px;background:#D4D0C8"><div class="a" style="left:0;top:0;width:238px;height:19px;overflow:hidden"><div class="a t" style="left:2px;top:3px;transform:scaleX(1.012);transform-origin:0 0">215: Количественные характеристики</div></div></div>
<div class="a" style="left:498px;top:398px;width:20px;height:19px;background:#D4D0C8"></div>
<div class="a raised" style="left:499px;top:399px;width:18px;height:18px"><div class="a t" style="left:5px;top:2px">1</div></div>
<div class="a" style="left:519px;top:397px;width:364px;height:20px;background:#FFFFEA;border-top:1px solid #c8c8c0"></div>
<div class="a t" style="left:521px;top:401px">^A768</div>
<div class="a" style="left:519px;top:317px;width:346px;height:21px;background:#800080"></div>
<div class="a t" style="left:520px;top:319px;color:#fff;font-weight:bold"><span style="color:#30e030">^C</span>Ферма<span style="color:#30e030">^F</span>Апдайк<span style="color:#30e030">^?</span>Джон<span style="color:#30e030">^E</span>романы<span style="color:#30e030">^G</span>пер. Е. Калашникова</div>
<div class="a raised" style="left:865px;top:318px;width:18px;height:19px"><div class="a t" style="left:3px;top:3px;font-weight:bold">...</div></div>
<svg class="a" style="left:488px;top:308px" width="42" height="40"><ellipse cx="20" cy="19.5" rx="17" ry="16.5" stroke="#e01818" stroke-width="3" fill="none"/></svg>
<div class="a" style="left:887px;top:23px;width:1px;height:108px;background:#404040"></div>
<div class="a" style="left:887px;top:133px;width:1px;height:308px;background:#404040"></div>
<div class="a" style="left:885px;top:135px;width:1px;height:304px;background:#fff"></div>
<div class="a" style="left:887px;top:444px;width:1px;height:212px;background:#404040"></div>
<!-- grid tabs -->
<div class="a" style="left:239px;top:417px;width:645px;height:3px;background:#000"></div>
<div class="a" style="left:240px;top:418px;width:643px;height:1px;background:#404040"></div>
<div class="a" style="left:239px;top:420px;width:645px;height:19px;background:#EAE8E4"></div>
<svg class="a" style="left:239px;top:419px" width="645" height="20">
<path d="M10.5 0.5L14.5 16.5H84.5L89.5 0.5" fill="#fff" stroke="#000"/>
<path d="M89.5 0.5L93.5 16.5H117.5L122.5 0.5" fill="#fff" stroke="#000"/>
<path d="M122.5 0.5L126.5 16.5H196.5L201.5 0.5" fill="#D4D0C8" stroke="#000"/>
<path d="M201.5 0.5L205.5 16.5H273.5L278.5 0.5" fill="#fff" stroke="#000"/>
<path d="M278.5 0.5L282.5 16.5H362.5L367.5 0.5" fill="#fff" stroke="#000"/>
<path d="M367.5 0.5L371.5 16.5H407.5L412.5 0.5" fill="#fff" stroke="#000"/>
<path d="M412.5 0.5L416.5 16.5H474.5L479.5 0.5" fill="#fff" stroke="#000"/>
<path d="M479.5 0.5L483.5 16.5H570.5L575.5 0.5" fill="#fff" stroke="#000"/>
</svg>
<div class="a t" style="left:253.5px;top:421px">Дублетность</div>
<div class="a t" style="left:331.9px;top:421px">Коды</div>
<div class="a t" style="left:365.5px;top:421px">Основное БО</div>
<div class="a t" style="left:442.9px;top:421px">Расширенное</div>
<div class="a t" style="left:520.6px;top:421px">Специфические</div>
<div class="a t" style="left:611.6px;top:421px">Экз-ры</div>
<div class="a t" style="left:655.5px;top:421px">Технология</div>
<div class="a t" style="left:722.5px;top:421px">Систематизация</div>
<div class="a" style="left:859px;top:421px;width:23px;height:13px;background:#000"></div>
<div class="a raisedh" style="left:860px;top:422px;width:10px;height:11px"><svg class="a" style="left:1px;top:1px" width="8" height="9"><path d="M0.5 4.5L4 1V3H7V6H4V8Z" fill="#808080"/><path d="M4 8V6H7" stroke="#fff" fill="none"/></svg></div>
<div class="a raisedh" style="left:871px;top:422px;width:10px;height:11px"><svg class="a" style="left:1px;top:1px" width="8" height="9"><path d="M7.5 4.5L4 1V3H1V6H4V8Z" fill="#000"/></svg></div>
<!-- lower left list -->
<div class="a" style="left:235px;top:440px;width:654px;height:1px;background:#404040"></div>
<div class="a" style="left:4px;top:444px;width:883px;height:1px;background:#fff"></div>
<div class="a" style="left:4px;top:444px;width:1px;height:212px;background:#fff"></div>
<div class="a" style="left:441px;top:445px;width:1px;height:211px;background:#404040"></div>
<div class="a" style="left:6px;top:446px;width:418px;height:209px;background:#000"></div>
<div class="a raisedh" style="left:7px;top:447px;width:16px;height:18px"><div class="a t" style="left:1px;top:3px">№</div></div>
<div class="a raisedh" style="left:24px;top:447px;width:16px;height:18px"></div>
<svg class="a" style="left:25px;top:448px" width="14" height="14"><path d="M0.5 8L3 6.5L5 9.5L12 1L13.5 2.5L5 13H3.8Z" fill="#10a020" stroke="#10a020" stroke-width="1" stroke-linejoin="round"/></svg>
<div class="a raisedh" style="left:41px;top:447px;width:382px;height:18px"></div>
<div class="a raisedh" style="left:7px;top:466px;width:16px;height:18px"><div class="a t" style="left:2px;top:3px">5</div></div>
<div class="a raisedh" style="left:24px;top:466px;width:16px;height:18px"></div>
<div class="a" style="left:41px;top:466px;width:382px;height:18px;background:#fff;color:#000;overflow:hidden"><div class="a t" style="left:2px;top:3px;transform:scaleX(1.015);transform-origin:0 0">Городниченковский, Виталий Максимович. Почти ортогональность инвариантов</div></div>
<div class="a" style="left:41px;top:484px;width:382px;height:1px;background:#c0c0c0"></div>
<div class="a raisedh" style="left:7px;top:485px;width:16px;height:18px"><div class="a t" style="left:2px;top:3px">6</div></div>
<div class="a raisedh" style="left:24px;top:485px;width:16px;height:18px"></div>
<div class="a" style="left:41px;top:485px;width:382px;height:18px;background:#fff;color:#000;overflow:hidden"><div class="a t" style="left:2px;top:3px;transform:scaleX(1.015);transform-origin:0 0">Гусева И.С. Извлечение коэффициента поляризуемости нейтрона из интерференции</div></div>
<div class="a" style="left:41px;top:503px;width:382px;height:1px;background:#c0c0c0"></div>
<div class="a raisedh" style="left:7px;top:504px;width:16px;height:18px"><div class="a t" style="left:2px;top:3px">7</div></div>
<div class="a raisedh" style="left:24px;top:504px;width:16px;height:18px"></div>
<div class="a" style="left:41px;top:504px;width:382px;height:18px;background:#fff;color:#000;overflow:hidden"><div class="a t" style="left:2px;top:3px;transform:scaleX(1.015);transform-origin:0 0">Перельман Я.И. Знаете ли вы физику [Текст] / ред. Я. О. Павлов, 1994. - 272 с.</div></div>
<div class="a" style="left:41px;top:522px;width:382px;height:1px;background:#c0c0c0"></div>
<div class="a raisedh" style="left:7px;top:523px;width:16px;height:18px"><div class="a t" style="left:2px;top:3px">8</div></div>
<div class="a raisedh" style="left:24px;top:523px;width:16px;height:18px"></div>
<div class="a" style="left:41px;top:523px;width:382px;height:18px;background:#fff;color:#000;overflow:hidden"><div class="a t" style="left:2px;top:3px;transform:scaleX(1.015);transform-origin:0 0">Дробышевский Н.П. Бухгалтерский учет в строительстве [Электронный ресурс]</div></div>
<div class="a" style="left:41px;top:541px;width:382px;height:1px;background:#c0c0c0"></div>
<div class="a raisedh" style="left:7px;top:542px;width:16px;height:18px"><div class="a t" style="left:2px;top:3px">9</div></div>
<div class="a raisedh" style="left:24px;top:542px;width:16px;height:18px"></div>
<div class="a" style="left:41px;top:542px;width:382px;height:18px;background:#fff;color:#000;overflow:hidden"><div class="a t" style="left:2px;top:3px;transform:scaleX(1.015);transform-origin:0 0">Грузинов В.П. Организация и технология внешнеторговой деятельности [Текст]</div></div>
<div class="a" style="left:41px;top:560px;width:382px;height:1px;background:#c0c0c0"></div>
<div class="a raisedh" style="left:7px;top:561px;width:16px;height:18px"><div class="a t" style="left:2px;top:3px">10</div></div>
<div class="a raisedh" style="left:24px;top:561px;width:16px;height:18px"></div>
<div class="a" style="left:41px;top:561px;width:382px;height:18px;background:#fff;color:#000;overflow:hidden"><div class="a t" style="left:2px;top:3px;transform:scaleX(1.015);transform-origin:0 0">Инструкция N8 &nbsp;(с изменениями и дополнениями) [Текст] : инструкции / Рос</div></div>
<div class="a" style="left:41px;top:579px;width:382px;height:1px;background:#c0c0c0"></div>
<div class="a raisedh" style="left:7px;top:580px;width:16px;height:18px"><div class="a t" style="left:2px;top:3px">11</div></div>
<div class="a raisedh" style="left:24px;top:580px;width:16px;height:18px"></div>
<div class="a" style="left:41px;top:580px;width:382px;height:18px;background:#fff;color:#000;overflow:hidden"><div class="a t" style="left:2px;top:3px;transform:scaleX(1.015);transform-origin:0 0">Данилевский, Григорий Петрович. Беглые в Новороссии [Текст] / послесловие</div></div>
<div class="a" style="left:41px;top:598px;width:382px;height:1px;background:#c0c0c0"></div>
<div class="a raisedh" style="left:7px;top:599px;width:16px;height:18px"><div class="a t" style="left:2px;top:3px">12</div></div>
<div class="a raisedh" style="left:24px;top:599px;width:16px;height:18px"></div>
<div class="a" style="left:41px;top:599px;width:382px;height:18px;background:#fff;color:#000;overflow:hidden"><div class="a t" style="left:2px;top:3px;transform:scaleX(1.015);transform-origin:0 0">Ивановская, И.Н. Голуби [Текст] : справочное издание / И.Н. Ивановская</div></div>
<div class="a" style="left:41px;top:617px;width:382px;height:1px;background:#c0c0c0"></div>
<div class="a raisedh" style="left:7px;top:618px;width:16px;height:18px"><div class="a t" style="left:2px;top:3px">13</div></div>
<div class="a raisedh" style="left:24px;top:618px;width:16px;height:18px"></div>
<div class="a" style="left:41px;top:618px;width:382px;height:18px;background:#0A246A;color:#fff;overflow:hidden"><div class="a t" style="left:2px;top:3px;transform:scaleX(1.015);transform-origin:0 0">Апдайк, Джон. Кентавр [Текст], 1984. - 768 с.</div></div>
<div class="a" style="left:41px;top:636px;width:382px;height:1px;background:#c0c0c0"></div>
<div class="a raisedh" style="left:7px;top:637px;width:16px;height:18px"><div class="a t" style="left:2px;top:3px"></div></div>
<div class="a raisedh" style="left:24px;top:637px;width:16px;height:18px"></div>
<div class="a" style="left:41px;top:637px;width:382px;height:19px;background:#fff;color:#000;overflow:hidden"><div class="a t" style="left:2px;top:3px;transform:scaleX(1.015);transform-origin:0 0">(новый)</div></div>
<div class="a" style="left:423px;top:446px;width:16px;height:208px;background:#EAE8E4"></div>
<div class="a raised" style="left:423px;top:447px;width:16px;height:16px"><div class="a" style="left:4px;top:6px;border-left:4px solid transparent;border-right:4px solid transparent;border-bottom:4px solid #000"></div></div>
<div class="a raised" style="left:423px;top:622px;width:16px;height:16px"></div>
<div class="a raised" style="left:423px;top:638px;width:16px;height:16px"><div class="a" style="left:4px;top:6px;border-left:4px solid transparent;border-right:4px solid transparent;border-top:4px solid #000"></div></div>
<!-- lower right panel -->
<div class="a" style="left:443px;top:444px;width:1px;height:212px;background:#fff"></div>
<div class="a" style="left:445px;top:466px;width:442px;height:190px;border-top:1px solid #fff;border-left:1px solid #fff;border-right:1px solid #404040;border-bottom:1px solid #404040;box-shadow:inset -1px -1px 0 #808080"></div>
<div class="a" style="left:547px;top:447px;width:137px;height:20px;background:#D4D0C8;border-top:1px solid #fff;border-left:1px solid #fff;border-right:1px solid #404040;box-shadow:inset -1px 0 0 #808080"><div class="a t" style="left:4px;top:3px;transform:scaleX(0.98);transform-origin:0 0">Связанные док-ты (НЕТ)</div></div>
<div class="a" style="left:445px;top:445px;width:103px;height:22px;background:#D4D0C8;border-top:1px solid #fff;border-left:1px solid #fff;border-right:1px solid #404040;box-shadow:inset -1px 0 0 #808080"><div class="a t" style="left:6px;top:3px">Полное описание</div></div>
<div class="a" style="left:446px;top:466px;width:101px;height:2px;background:#D4D0C8"></div>
<svg class="a" style="left:866px;top:447px" width="16" height="16"><rect x="6" y="4" width="8" height="6" fill="#f4f4f8" stroke="#9098a8"/><path d="M3 9H14L15.5 13H4.5Z" fill="#e8ecec" stroke="#707880"/><rect x="4.5" y="13" width="11" height="2" fill="#7a8080"/><path d="M6 14H12" stroke="#40a060"/><rect x="1.5" y="2.5" width="6" height="9" fill="#dce8fc" stroke="#5a7ad0"/><path d="M3 5H6M3 7H6M3 9H6" stroke="#3060c0"/><path d="M8 1H9M10 1H11M12 1.5L14 3.5" stroke="#d01818" stroke-width="1.5"/></svg>
<div class="a" style="left:448px;top:469px;width:435px;height:183px;background:#fff;box-shadow:inset 1px 1px 0 #808080,inset 2px 2px 0 #404040,inset -1px -1px 0 #fff,inset -2px -2px 0 #D4D0C8"></div>
<div class="a t" style="left:498px;top:473px">(Нет сведений об экземплярах)</div>
<div class="a t" style="left:451px;top:501px"><span style="color:#108010">Апдайк</span><b>, Джон.</b></div>
<div class="a t" style="left:499px;top:515px">Кентавр [Текст] / пер. В. <span style="color:#108010">Хинкинс</span> ; Ферма : романы / Джон <span style="color:#108010">Апдайк</span> ; пер. Е.</div>
<div class="a t" style="left:451px;top:529px">Калашникова. - [Б. м. : б. и.], 1984. - 768 с. - 5.10 р.</div>
<div class="a t" style="left:454px;top:543px;font-weight:bold">Нет сведений об экземплярах</div>
<div class="a" style="left:4px;top:655px;width:438px;height:1px;background:#fff"></div>
<div class="a" style="left:4px;top:656px;width:884px;height:1px;background:#808080"></div>
<!-- status bar -->
<div class="a" style="left:4px;top:659px;width:166px;height:17px;border-top:1px solid #808080;border-left:1px solid #808080;border-right:1px solid #fff;border-bottom:1px solid #fff"><div class="a t" style="left:1px;top:1px;color:#000;transform:scaleX(0.925);transform-origin:0 0">БД: IBIS Макс.MFN: 13</div></div>
<div class="a" style="left:170px;top:659px;width:139px;height:17px;border-top:1px solid #808080;border-left:1px solid #808080;border-right:1px solid #fff;border-bottom:1px solid #fff"><div class="a t" style="left:2px;top:1px;color:#000;transform:scaleX(0.94);transform-origin:0 0">Текущий MFN: 13</div></div>
<div class="a" style="left:310px;top:659px;width:69px;height:17px;border-top:1px solid #808080;border-left:1px solid #808080;border-right:1px solid #fff;border-bottom:1px solid #fff"><div class="a t" style="left:2px;top:1px;color:#000;transform:scaleX(0.94);transform-origin:0 0">ИЗМЕН.</div></div>
<div class="a" style="left:380px;top:659px;width:89px;height:17px;border-top:1px solid #808080;border-left:1px solid #808080;border-right:1px solid #fff;border-bottom:1px solid #fff"><div class="a t" style="left:1px;top:1px;color:#108010;transform:scaleX(1.0);transform-origin:0 0">Отмечено - 0</div></div>
<div class="a" style="left:470px;top:659px;width:351px;height:17px;border-top:1px solid #808080;border-left:1px solid #808080;border-right:1px solid #fff;border-bottom:1px solid #fff"><div class="a t" style="left:1px;top:1px;color:#900090;transform:scaleX(0.98);transform-origin:0 0">Сборник без общего заглавия</div></div>
<div class="a" style="left:823px;top:659px;width:64px;height:17px;border-top:1px solid #808080;border-left:1px solid #808080;border-right:1px solid #fff;border-bottom:1px solid #fff"><div class="a t" style="left:2px;top:1px;color:#000;transform:scaleX(0.98);transform-origin:0 0">15:40 &nbsp;01:10</div></div>
</div></body></html>
